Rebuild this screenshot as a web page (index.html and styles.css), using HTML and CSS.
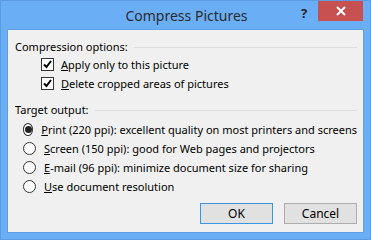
FILE: index.html
```html
<!DOCTYPE html>
<html>
<head>
  <title>Compress Pictures</title>
  <link rel="stylesheet" href="styles.css">
</head>
<body>
  <div class="window">
    <div class="titlebar">
      <span class="title">Compress Pictures</span>
      <span class="help">?</span>
      <span class="close">
        <svg width="10" height="10" viewBox="0 0 10 10"><path d="M1 1L9 9M9 1L1 9" stroke="#fff" stroke-width="2"/></svg>
      </span>
    </div>
    <div class="panel">
      <div class="group-head"><span>Compression options:</span><div class="rule"></div></div>
      <div class="row check-row">
        <span class="box"><svg width="11" height="11" viewBox="0 0 11 11"><path d="M2 5.5L4.5 8L9 2" fill="none" stroke="#000" stroke-width="2"/></svg></span>
        <span><u>A</u>pply only to this picture</span>
      </div>
      <div class="row check-row">
        <span class="box"><svg width="11" height="11" viewBox="0 0 11 11"><path d="M2 5.5L4.5 8L9 2" fill="none" stroke="#000" stroke-width="2"/></svg></span>
        <span><u>D</u>elete cropped areas of pictures</span>
      </div>

      <div class="group-head target"><span>Target output:</span><div class="rule"></div></div>
      <div class="row radio-row">
        <span class="radio on"></span>
        <span><u>P</u>rint (220 ppi): excellent quality on most printers and screens</span>
      </div>
      <div class="row radio-row">
        <span class="radio"></span>
        <span><u>S</u>creen (150 ppi): good for Web pages and projectors</span>
      </div>
      <div class="row radio-row">
        <span class="radio"></span>
        <span><u>E</u>-mail (96 ppi): minimize document size for sharing</span>
      </div>
      <div class="row radio-row">
        <span class="radio"></span>
        <span><u>U</u>se document resolution</span>
      </div>

      <div class="buttons">
        <button class="btn default">OK</button>
        <button class="btn">Cancel</button>
      </div>
    </div>
  </div>
</body>
</html>
```

FILE: styles.css
```css
body {
  margin: 0;
  font-family: "Noto Sans", "Open Sans", sans-serif;
  font-size: 11px;
  color: #000;
  background: #fff;
}
.window {
  width: 371px;
  height: 240px;
  box-sizing: border-box;
  background: #6aaef6;
  border: 1px solid #5a9be2;
  padding: 0 6px 6px 6px;
  display: flex;
  flex-direction: column;
}
.titlebar {
  height: 28px;
  position: relative;
  text-align: center;
}
.title {
  display: block;
  font-size: 14px;
  line-height: 29px;
  color: #2b2b2b;
  padding-left: 2px;
}
.help {
  position: absolute;
  left: 294px;
  top: 3px;
  font-weight: bold;
  font-size: 13px;
  color: #222;
}
.close {
  position: absolute;
  left: 311px;
  top: 0;
  width: 45px;
  height: 20px;
  background: #c75050;
  display: flex;
  align-items: center;
  justify-content: center;
}
.panel {
  flex: 1;
  background: #f0f0f0;
  border: 1px solid #5f9fe6;
  padding: 9px 6px 0 7px;
}
.group-head {
  display: flex;
  align-items: center;
  height: 15px;
  line-height: 15px;
}
.group-head .rule {
  flex: 1;
  height: 1px;
  background: #dcdcdc;
  margin: 1px 0 0 6px;
}
.group-head.target {
  margin-top: 9px;
}
.row {
  display: flex;
  align-items: center;
  height: 19px;
  white-space: nowrap;
}
.check-row {
  padding-left: 26px;
}
.group-head + .row {
  margin-top: 1px;
}
.group-head.target + .row {
  margin-top: 3px;
}
.box {
  width: 11px;
  height: 11px;
  border: 1px solid #333;
  background: #fff;
  margin-right: 7px;
  display: flex;
}
.radio-row {
  padding-left: 8px;
}
.radio {
  width: 11px;
  height: 11px;
  border: 1px solid #333;
  border-radius: 50%;
  background: #fff;
  margin-right: 8px;
  display: flex;
  align-items: center;
  justify-content: center;
}
.radio.on::after {
  content: "";
  width: 7px;
  height: 7px;
  border-radius: 50%;
  background: #222;
}
.buttons {
  display: flex;
  justify-content: flex-end;
  gap: 11px;
  margin-top: 7px;
}
.btn {
  width: 73px;
  height: 21px;
  background: #e1e1e1;
  border: 1px solid #adadad;
  font-family: inherit;
  font-size: 12px;
  color: #000;
  padding: 0;
}
.btn.default {
  border-color: #3c94e6;
}
```
